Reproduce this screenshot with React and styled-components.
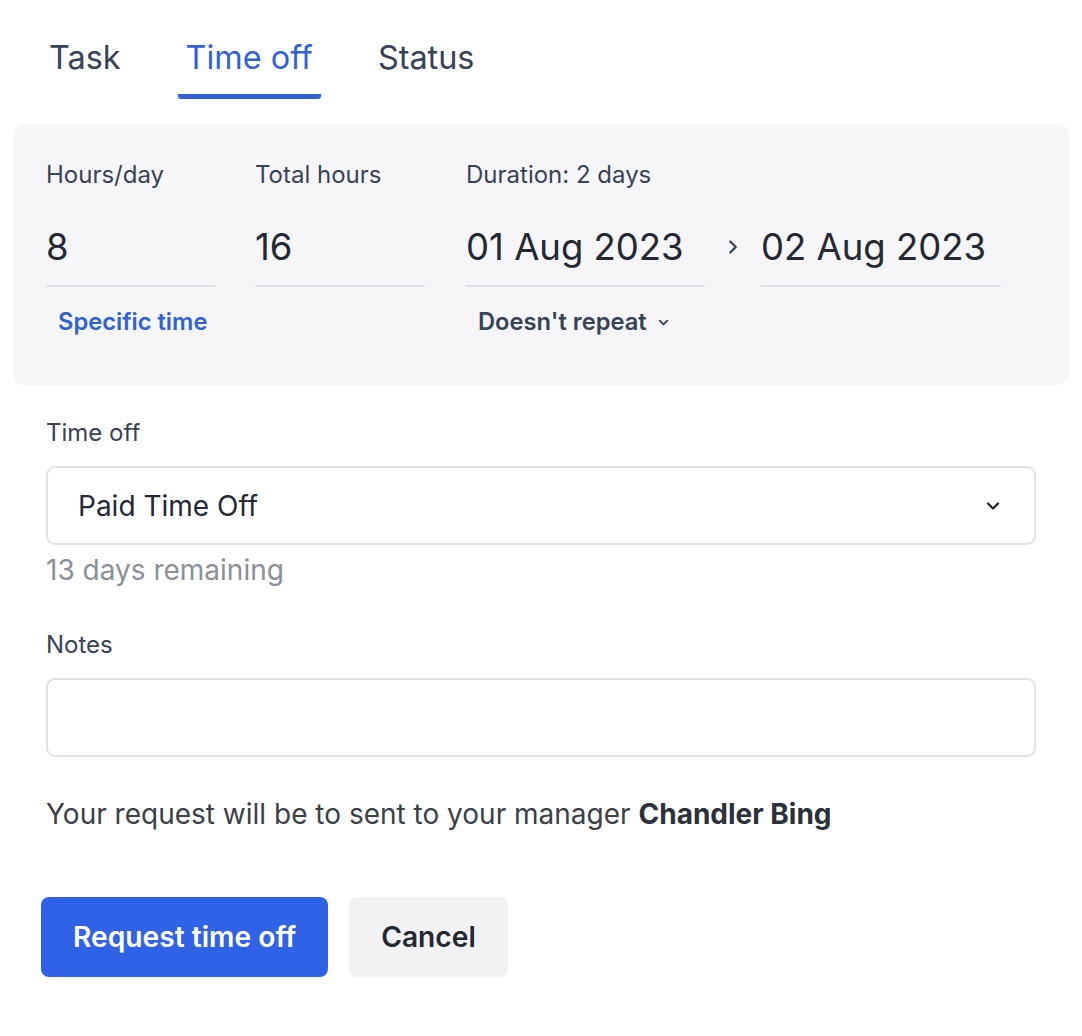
import styled, { createGlobalStyle } from "styled-components";

const GlobalStyle = createGlobalStyle`
    * { box-sizing: border-box; }
    body {
        margin: 0;
        background: #FFFFFF;
        font-family: Inter, "Noto Sans", "Liberation Sans", sans-serif;
        color: #2B303A;
    }
`;

const Page = styled.div`
    width: 1082px;
    padding: 35px 13px 40px 13px;
`;

const Tabs = styled.div`
    display: flex;
    gap: 49px;
    padding-left: 28px;
    margin-bottom: 25px;
`;

const Tab = styled.div`
    padding: 4px 8px 17px;
    font-size: 32.4px;
    line-height: 38px;
    color: ${(p) => (p.active ? "#2F62D9" : "#364257")};
    border-bottom: 5px solid ${(p) => (p.active ? "#2F62D9" : "transparent")};
    border-radius: 0 0 3px 3px;
`;

const Panel = styled.div`
    background: #F6F6F9;
    border-radius: 12px;
    padding: 36px 33px 48px;
    display: flex;
    align-items: flex-start;
`;

const Field = styled.div`
    display: flex;
    flex-direction: column;
    width: ${(p) => p.width}px;
    margin-right: ${(p) => p.gap || 0}px;
`;

const Label = styled.div`
    font-size: 24px;
    line-height: 30px;
    color: #384257;
`;

const Value = styled.div`
    font-size: 36.5px;
    line-height: 44px;
    color: #232833;
    padding: 35px 0 16px;
    border-bottom: 2px solid #DEE1EA;
    white-space: nowrap;
`;

const Arrow = styled.div`
    width: 56px;
    display: flex;
    justify-content: center;
    padding-top: 76px;
    color: #364257;
`;

const LinkText = styled.div`
    font-size: 23.7px;
    line-height: 30px;
    font-weight: 600;
    color: ${(p) => (p.blue ? "#2F62D9" : "#364257")};
    margin-top: 20px;
    padding-left: 12px;
    display: flex;
    align-items: center;
    gap: 9px;
    white-space: nowrap;
`;

const Form = styled.div`
    padding: 0 33px;
`;

const FormLabel = styled(Label)`
    margin-top: ${(p) => p.top}px;
    margin-bottom: 18px;
`;

const Select = styled.div`
    height: 79px;
    border: 2px solid #DFE2E7;
    border-radius: 9px;
    display: flex;
    align-items: center;
    justify-content: space-between;
    padding: 0 31px 0 30px;
    font-size: 28px;
    color: #232833;
`;

const Hint = styled.div`
    font-size: 28px;
    color: #8B8F97;
    margin-top: 8px;
    line-height: 34px;
`;

const Notes = styled.div`
    height: 79px;
    border: 2px solid #DFE2E7;
    border-radius: 9px;
`;

const Message = styled.p`
    font-size: 28px;
    color: #3B3F47;
    margin: 40px 0 0;
    line-height: 34px;
    b {
        font-weight: 700;
        color: #2B303A;
    }
`;

const Actions = styled.div`
    display: flex;
    gap: 21px;
    margin-top: 66px;
    margin-left: -5px;
`;

const Button = styled.button`
    height: 80px;
    padding: 0 32px;
    border: none;
    border-radius: 8px;
    font-family: inherit;
    font-size: 28.2px;
    font-weight: 600;
    background: ${(p) => (p.primary ? "#2F62E6" : "#F2F2F4")};
    color: ${(p) => (p.primary ? "#FFFFFF" : "#232833")};
`;

const Chevron = ({ size = 14, dir = "down", weight = 3 }) => (
    <svg width={size} height={size} viewBox="0 0 24 24" fill="none" stroke="currentColor" strokeWidth={weight} strokeLinecap="round" strokeLinejoin="round">
        {dir === "down" ? <path d="M6 9l6 6 6-6" /> : <path d="M9 6l6 6-6 6" />}
    </svg>
);

export default function App() {
    return (
        <>
            <GlobalStyle />
            <Page>
                <Tabs>
                    <Tab>Task</Tab>
                    <Tab active>Time off</Tab>
                    <Tab>Status</Tab>
                </Tabs>
                <Panel>
                    <Field width={169} gap={40}>
                        <Label>Hours/day</Label>
                        <Value>8</Value>
                        <LinkText blue>Specific time</LinkText>
                    </Field>
                    <Field width={170} gap={41}>
                        <Label>Total hours</Label>
                        <Value>16</Value>
                    </Field>
                    <Field width={239}>
                        <Label>Duration: 2 days</Label>
                        <Value>01 Aug 2023</Value>
                        <LinkText>
                            Doesn't repeat <Chevron size={15} />
                        </LinkText>
                    </Field>
                    <Arrow>
                        <Chevron size={22} dir="right" weight={2.5} />
                    </Arrow>
                    <Field width={240}>
                        <Label>&nbsp;</Label>
                        <Value>02 Aug 2023</Value>
                    </Field>
                </Panel>
                <Form>
                    <FormLabel top={33}>Time off</FormLabel>
                    <Select>
                        Paid Time Off
                        <Chevron size={20} weight={2.8} />
                    </Select>
                    <Hint>13 days remaining</Hint>
                    <FormLabel top={43}>Notes</FormLabel>
                    <Notes />
                    <Message>
                        Your request will be to sent to your manager <b>Chandler Bing</b>
                    </Message>
                    <Actions>
                        <Button primary>Request time off</Button>
                        <Button>Cancel</Button>
                    </Actions>
                </Form>
            </Page>
        </>
    );
}
